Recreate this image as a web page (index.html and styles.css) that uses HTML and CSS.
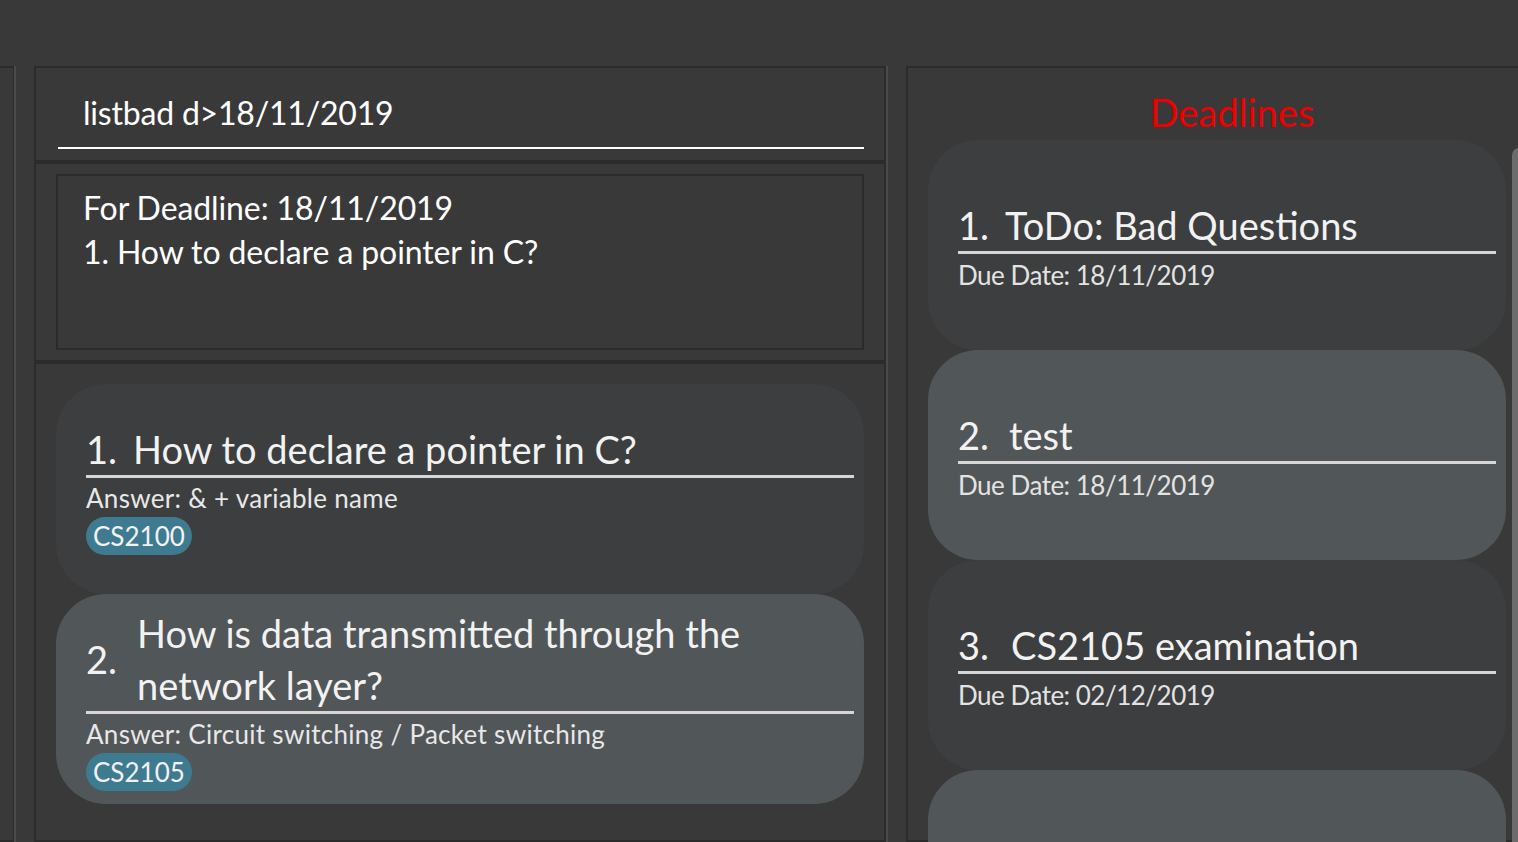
FILE: index.html
```html
<!DOCTYPE html>
<html lang="en">
<head>
<meta charset="utf-8">
<title>Deadlines</title>
<link rel="stylesheet" href="styles.css">
</head>
<body>
<div class="app">
  <div class="menubar"></div>
  <div class="workspace">
    <div class="panel side-panel"></div>
    <div class="divider"></div>
    <div class="main-col">
      <div class="panel command-panel">
        <div class="command-field">listbad d&gt;18/11/2019</div>
      </div>
      <div class="panel result-panel">
        <div class="result-box">For Deadline: 18/11/2019<br>1. How to declare a pointer in C?</div>
      </div>
      <div class="panel list-panel">
        <div class="card card-odd">
          <div class="card-title-row"><span class="num">1.</span><span class="title">How to declare a pointer in C?</span></div>
          <div class="answer">Answer: &amp; + variable name</div>
          <div class="tags"><span class="tag">CS2100</span></div>
        </div>
        <div class="card card-even">
          <div class="card-title-row"><span class="num num-wide">2.</span><span class="title">How is data transmitted through the network layer?</span></div>
          <div class="answer">Answer: Circuit switching / Packet switching</div>
          <div class="tags"><span class="tag">CS2105</span></div>
        </div>
      </div>
    </div>
    <div class="divider"></div>
    <div class="panel deadline-panel">
      <div class="deadline-heading">Deadlines</div>
      <div class="deadline-body">
        <div class="deadline-list">
          <div class="card card-odd">
            <div class="card-title-row"><span class="num">1.</span><span class="title">ToDo: Bad Questions</span></div>
            <div class="due">Due Date: 18/11/2019</div>
          </div>
          <div class="card card-even">
            <div class="card-title-row"><span class="num num-wide">2.</span><span class="title">test</span></div>
            <div class="due">Due Date: 18/11/2019</div>
          </div>
          <div class="card card-odd">
            <div class="card-title-row"><span class="num num-wider">3.</span><span class="title">CS2105 examination</span></div>
            <div class="due">Due Date: 02/12/2019</div>
          </div>
          <div class="card card-even">
            <div class="card-title-row"><span class="num num-wide">4.</span><span class="title">CS2103T Test</span></div>
            <div class="due">Due Date: 04/12/2019</div>
          </div>
        </div>
        <div class="scrollbar"></div>
      </div>
    </div>
  </div>
</div>
</body>
</html>
```
FILE: styles.css
```css
html, body {
  margin: 0;
  padding: 0;
  height: 100%;
  overflow: hidden;
  background: #393939;
}

body {
  font-family: Lato, "Liberation Sans", sans-serif;
  color: #ffffff;
}

.app {
  width: 1518px;
  height: 842px;
  overflow: hidden;
}

.menubar {
  height: 66px;
  background: #393939;
}

.workspace {
  display: flex;
  height: 776px;
  align-items: stretch;
}

.panel {
  background: #393939;
  border: 2px solid #2b2b2b;
  box-sizing: border-box;
}

.side-panel {
  width: 14px;
  flex: none;
  border-left: none;
  border-right-width: 1px;
}

.divider {
  width: 20px;
  flex: none;
  box-sizing: border-box;
  border-left: 2px solid #4a4a4a;
}

.main-col {
  width: 852px;
  flex: none;
  display: flex;
  flex-direction: column;
}

.command-panel {
  height: 96px;
  flex: none;
  padding: 25px 20px 0 22px;
}

.command-field {
  font-size: 32px;
  line-height: 40px;
  letter-spacing: -0.2px;
  padding: 0 0 14px 25px;
  border-bottom: 2px solid #ffffff;
  white-space: nowrap;
}

.result-panel {
  height: 200px;
  flex: none;
  padding: 10px 20px;
}

.result-box {
  height: 100%;
  box-sizing: border-box;
  border: 2px solid #2b2b2b;
  padding: 10px 25px;
  font-size: 32px;
  line-height: 44px;
  letter-spacing: -0.1px;
}

.list-panel {
  flex: 1;
  padding: 20px 20px 0 20px;
}

.card {
  height: 210px;
  box-sizing: border-box;
  border-radius: 50px;
  padding: 0 10px 0 30px;
  display: flex;
  flex-direction: column;
  justify-content: center;
}

.card-odd {
  background: #3c3e3f;
}

.card-even {
  background: #515658;
}

.card-title-row {
  display: flex;
  align-items: center;
  gap: 16px;
  border-bottom: 3px solid #d6d6d6;
  font-size: 38px;
  line-height: 52px;
  color: #f2f2f2;
}

.num {
  flex: none;
}

.num-wide {
  margin-right: 4px;
}

.num-wider {
  margin-right: 6px;
}

.answer {
  margin-top: 5px;
  font-size: 26px;
  line-height: 30px;
  color: #e8e8e8;
  letter-spacing: 0.3px;
}

.tags {
  margin-top: 4px;
  display: flex;
}

.tag {
  background: #3e7b91;
  color: #f2f2f2;
  border-radius: 19px;
  font-size: 26px;
  line-height: 38px;
  padding: 0 7px;
}

.deadline-panel {
  width: 652px;
  flex: none;
}

.deadline-heading {
  text-align: center;
  color: #ee0000;
  font-size: 38px;
  line-height: 46px;
  padding-top: 21px;
  margin-bottom: 5px;
}

.deadline-body {
  display: flex;
  padding-left: 20px;
}

.deadline-list {
  width: 578px;
  flex: none;
}

.due {
  margin-top: 5px;
  font-size: 26px;
  line-height: 32px;
  color: #e3e3e3;
  letter-spacing: -0.5px;
}

.scrollbar {
  width: 14px;
  height: 900px;
  margin-left: 6px;
  margin-top: 8px;
  background: #6c6c6c;
  border-radius: 7px 7px 0 0;
}
```
